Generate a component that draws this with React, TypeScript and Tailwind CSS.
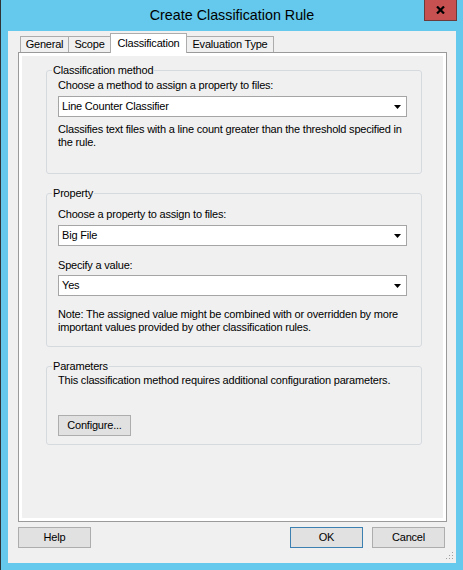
import type { ReactNode } from 'react'

const font = "font-['Liberation_Sans',Arial,sans-serif]"

function Combo({ value }: { value: string }) {
  return (
    <div className="flex h-[21px] w-full items-center justify-between border border-[#a5a5a5] bg-white pl-[3px] pr-[5px]">
      <span>{value}</span>
      <svg width="7" height="4" viewBox="0 0 7 4">
        <path d="M0 0h7L3.5 4z" fill="#000" />
      </svg>
    </div>
  )
}

function Button({ label, primary }: { label: string; primary?: boolean }) {
  return (
    <button
      className={
        primary
          ? 'h-[21px] w-[73px] border border-[#3c7fb1] bg-[#e1e1e1] text-center'
          : 'h-[21px] w-[73px] border border-[#adadad] bg-[#e1e1e1] text-center'
      }
    >
      {label}
    </button>
  )
}

function Group({ title, className, children }: { title: string; className?: string; children: ReactNode }) {
  return (
    <fieldset className={`rounded-[3px] border border-[#d5dadf] ${className ?? ''}`}>
      <legend className="ml-[5px] px-[1px] leading-[13px]">{title}</legend>
      {children}
    </fieldset>
  )
}

export default function App() {
  return (
    <div className={`flex h-[570px] w-[463px] flex-col border-l border-[#2f3336] bg-[#64c9ec] text-black ${font}`}>
      {/* title bar */}
      <div className="relative flex h-[31px] items-center justify-center">
        <span className="text-[14.3px] leading-none">Create Classification Rule</span>
        <div className="absolute right-[6px] top-0 flex h-[21px] w-[33px] items-center justify-center border border-t-0 border-[#6b3a3a] bg-[#c75050]">
          <svg width="9" height="8" viewBox="0 0 9 8">
            <path d="M1 0.5l7 7M8 0.5l-7 7" stroke="#000" strokeWidth="2.2" />
          </svg>
        </div>
      </div>

      {/* client area */}
      <div className="relative mx-[7px] mb-[7px] flex flex-1 flex-col bg-[#f0f0f0] pl-[10px] pr-[9px] text-[11px] leading-[13px] tracking-[-0.2px]">
        {/* tabs */}
        <div className="flex h-[21px] items-end pl-[2px]">
          <div className="flex h-[16px] w-[49px] items-center justify-center border border-b-0 border-[#acacac] bg-[#f0f0f0]">General</div>
          <div className="-ml-px flex h-[16px] w-[43px] items-center justify-center border border-b-0 border-[#acacac] bg-[#f0f0f0]">Scope</div>
          <div className="relative z-10 -mb-px -ml-px flex h-[20px] w-[77px] items-center justify-center border border-b-0 border-[#acacac] bg-white pb-[1px]">
            Classification
          </div>
          <div className="-ml-px flex h-[16px] w-[88px] items-center justify-center border border-b-0 border-[#acacac] bg-[#f0f0f0]">Evaluation Type</div>
        </div>

        {/* tab page */}
        <div className="flex flex-1 flex-col border border-[#9a9a9a] bg-white p-[3px]">
          <div className="flex flex-1 flex-col bg-[#f0f0f0] pl-[24px] pr-[21px] pt-[8px]">
            <Group title="Classification method">
              <div className="pb-[24px] pl-[11px] pr-[14px] pt-[2px]">
                <div>Choose a method to assign a property to files:</div>
                <div className="mt-[4px]">
                  <Combo value="Line Counter Classifier" />
                </div>
                <p className="mt-[6px]">
                  Classifies text files with a line count greater than the threshold specified in the rule.
                </p>
              </div>
            </Group>

            <Group title="Property" className="mt-[13px]">
              <div className="pb-[12px] pl-[11px] pr-[14px] pt-[8px]">
                <div>Choose a property to assign to files:</div>
                <div className="mt-[4px]">
                  <Combo value="Big File" />
                </div>
                <div className="mt-[13px]">Specify a value:</div>
                <div className="mt-[3px]">
                  <Combo value="Yes" />
                </div>
                <p className="mt-[12px]">
                  Note: The assigned value might be combined with or overridden by more important values provided by
                  other classification rules.
                </p>
              </div>
            </Group>

            <Group title="Parameters" className="mt-[13px]">
              <div className="pb-[8px] pl-[11px] pr-[14px] pt-[1px]">
                <div>This classification method requires additional configuration parameters.</div>
                <div className="mt-[28px]">
                  <Button label="Configure..." />
                </div>
              </div>
            </Group>
          </div>
        </div>

        {/* dialog buttons */}
        <div className="mb-[15px] mr-[2px] mt-[5px] flex">
          <Button label="Help" />
          <div className="ml-auto flex gap-[9px]">
            <Button label="OK" primary />
            <Button label="Cancel" />
          </div>
        </div>

        {/* size grip */}
        <svg className="absolute bottom-[3px] right-[2px]" width="9" height="9" viewBox="0 0 9 9">
          {[
            [7, 1],
            [7, 4],
            [4, 4],
            [7, 7],
            [4, 7],
            [1, 7],
          ].map(([x, y]) => (
            <rect key={`${x}-${y}`} x={x} y={y} width="1" height="1" fill="#a0a0a0" />
          ))}
        </svg>
      </div>
    </div>
  )
}
